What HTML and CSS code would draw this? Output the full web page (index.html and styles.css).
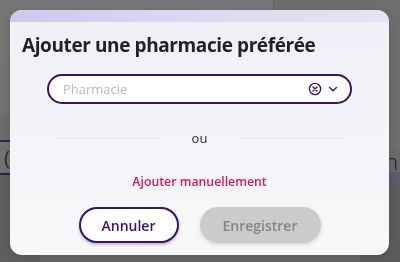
FILE: index.html
```html
<!DOCTYPE html>
<html lang="fr">
<head>
<meta charset="utf-8">
<link rel="stylesheet" href="styles.css">
</head>
<body>
<div class="page">
  <div class="page-top"><div class="page-top-left"></div><div class="page-top-right"></div></div>
  <div class="page-mid">
    <div class="mid-left">
      <div class="ml-a"></div>
      <div class="ml-b"><span class="paren">(</span></div>
      <div class="ml-c"></div>
    </div>
    <div class="mid-center"></div>
    <div class="mid-right">
      <div class="mr-a"></div>
      <div class="mr-b"><span class="nchar">n</span></div>
      <div class="mr-c"></div>
      <div class="mr-d"></div>
    </div>
  </div>
</div>

<div class="overlay">
  <div class="dialog">
    <div class="dialog-band"></div>
    <div class="dialog-body">
      <h1 class="title">Ajouter une pharmacie préférée</h1>
      <div class="select">
        <span class="placeholder">Pharmacie</span>
        <span class="select-icons">
          <svg class="ic-clear" width="14" height="14" viewBox="0 0 14 14">
            <circle cx="7" cy="7" r="5.6" fill="none" stroke="#3a1363" stroke-width="1.4"/>
            <path d="M5 5 L9 9 M9 5 L5 9" stroke="#3a1363" stroke-width="1.4" stroke-linecap="round"/>
          </svg>
          <svg class="ic-chev" width="12" height="12" viewBox="0 0 12 12">
            <path d="M2.5 4.5 L6 7.8 L9.5 4.5" fill="none" stroke="#3a1363" stroke-width="1.4" stroke-linecap="round" stroke-linejoin="round"/>
          </svg>
        </span>
      </div>
      <div class="sep">
        <span class="sep-line"></span>
        <span class="sep-text">ou</span>
        <span class="sep-line"></span>
      </div>
      <a class="manual">Ajouter manuellement</a>
      <div class="actions">
        <button class="btn btn-cancel">Annuler</button>
        <button class="btn btn-save">Enregistrer</button>
      </div>
    </div>
  </div>
</div>
</body>
</html>
```

FILE: styles.css
```css
* { box-sizing: border-box; }
html, body { margin: 0; padding: 0; }
body {
  width: 400px;
  height: 262px;
  overflow: hidden;
  background: #656565;
  font-family: "Open Sans", "Noto Sans", sans-serif;
}

/* backdrop page (dimmed) */
.page { width: 400px; height: 262px; display: flex; flex-direction: column; }
.page-top { height: 117px; display: flex; }
.page-top-left { width: 273px; background: linear-gradient(#767676, #717171); }
.page-top-right { flex: 1; background: linear-gradient(#6e6e6e, #6c6c6c); border-left: 1px solid #666; }
.page-mid { flex: 1; display: flex; }
.mid-left { width: 40px; display: flex; flex-direction: column; }
.ml-a { height: 25px; background: #6b6b6b; border-bottom: 2px solid #33224a; }
.ml-b { height: 33px; background: #717171; border-bottom: 2px solid #2e1f45; }
.paren { display: block; padding: 4px 0 0 4px; font-size: 20px; line-height: 24px; color: #2a2a2a; }
.ml-c { flex: 1; background: #5f5f5f; }
.mid-center { flex: 1; background: #676767; }
.mid-right { width: 40px; display: flex; flex-direction: column; }
.mr-a { height: 33px; background: #6d6d6d; }
.mr-b { height: 22px; background: #6a6a6a; }
.nchar { display: block; padding-left: 25px; font-size: 22px; line-height: 22px; font-weight: 300; color: #1f1b2b; }
.mr-c { height: 16px; background: #5d5a69; }
.mr-d { flex: 1; background: #5b5b5b; }

/* overlay + dialog */
.overlay {
  position: fixed;
  inset: 0;
  padding: 10px 11px 7px 10px;
  display: flex;
}
.dialog {
  flex: 1;
  border-radius: 12px;
  overflow: hidden;
  display: flex;
  flex-direction: column;
  background: linear-gradient(#eff0f7, #f8f8fa);
  box-shadow: 0 2px 6px rgba(0,0,0,0.15);
}
.dialog-band {
  height: 12px;
  background: linear-gradient(90deg, #cdc8ef, #dcd9f2 50%, #e4e4f4);
}
.dialog-body {
  flex: 1;
  display: flex;
  flex-direction: column;
  align-items: center;
  padding: 11px 0 0;
}
.title {
  align-self: flex-start;
  margin: 0 0 0 12px;
  font-size: 19px;
  line-height: 24px;
  font-weight: 700;
  color: #222226;
  letter-spacing: -0.4px;
}
.select {
  margin-top: 17px;
  width: 305px;
  height: 30px;
  border: 2px solid #3a1363;
  border-radius: 15px;
  background: #fff;
  display: flex;
  align-items: center;
  padding: 0 11px 0 14px;
}
.placeholder {
  flex: 1;
  font-size: 13px;
  color: #b9b9bd;
}
.select-icons { display: flex; align-items: center; gap: 5px; }
.ic-clear { display: block; }
.ic-chev { display: block; margin-top: -1px; }

.sep {
  margin-top: 26px;
  width: 291px;
  height: 16px;
  display: flex;
  align-items: center;
}
.sep-line { flex: 1; height: 1px; background: #e6e7ee; }
.sep-text {
  width: 80px;
  text-align: center;
  font-size: 13px;
  line-height: 16px;
  color: #2c2c2c;
}
.manual {
  margin-top: 27px;
  font-size: 12.3px;
  line-height: 18px;
  font-weight: 600;
  color: #d2195a;
}
.actions {
  margin-top: 16px;
  display: flex;
  gap: 21px;
}
.btn {
  height: 36px;
  border-radius: 18px;
  font-family: "Open Sans", "Noto Sans", sans-serif;
  font-size: 14px;
  font-weight: 600;
  padding: 0;
  cursor: pointer;
}
.btn-cancel {
  width: 100px;
  background: #fff;
  border: 2px solid #3a1363;
  color: #3a1363;
  box-shadow: 0 2px 3px rgba(40,10,80,0.25);
}
.btn-save {
  width: 121px;
  background: #cdcbc9;
  border: none;
  color: #868585;
  box-shadow: 0 2px 4px rgba(0,0,0,0.12);
}
```
